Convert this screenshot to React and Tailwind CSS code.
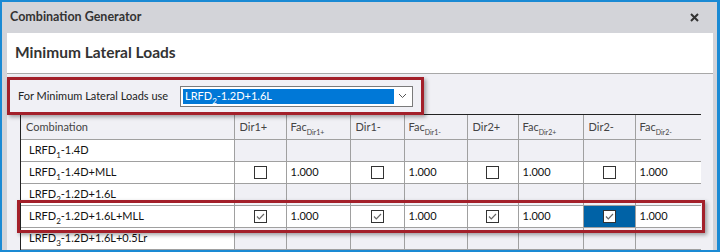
import React from "react";

const font = { fontFamily: 'Lato, "Segoe UI", "Noto Sans", sans-serif' };

const cols = [213, 52, 64, 54, 63, 51, 65, 52, 66];

const rows = [
  { n: "1", rest: "-1.4D", active: false },
  { n: "1", rest: "-1.4D+MLL", active: true, checked: false },
  { n: "2", rest: "-1.2D+1.6L", active: false },
  { n: "2", rest: "-1.2D+1.6L+MLL", active: true, checked: true },
  { n: "3", rest: "-1.2D+1.6L+0.5Lr", active: false },
];

function Check({ checked }) {
  return (
    <span className="inline-flex w-[13px] h-[13px] border border-[#333] bg-white items-center justify-center align-middle">
      {checked && (
        <svg width="11" height="11" viewBox="0 0 11 11">
          <path d="M2 5.5 L4.3 7.8 L9 3" fill="none" stroke="#666" strokeWidth="1.2" />
        </svg>
      )}
    </span>
  );
}

function Fac({ sub }) {
  return (
    <span>
      Fac<sub className="text-[7px] align-[-3px]">{sub}</sub>
    </span>
  );
}

function Lrfd({ n, rest }) {
  return (
    <span>
      LRFD<sub className="text-[8px] align-[-2px]">{n}</sub>
      {rest}
    </span>
  );
}

export default function App() {
  const dirs = ["Dir1+", "Dir1-", "Dir2+", "Dir2-"];
  return (
    <div style={font} className="w-[720px] h-[252px] border-t-2 border-l-2 border-r-[3px] border-b-2 border-[#1a8ad4] bg-[#d3d4d9] flex flex-col overflow-hidden">
      <div className="h-[31px] flex items-center justify-between pl-[8px] pr-[18px] shrink-0">
        <span className="text-[12.5px] font-bold text-[#333]">Combination Generator</span>
        <svg width="9" height="9" viewBox="0 0 9 9">
          <path d="M1 1 L8 8 M8 1 L1 8" stroke="#333" strokeWidth="2" />
        </svg>
      </div>
      <div className="flex-1 flex flex-col ml-[5px] mr-[4px] min-h-0">
        <div className="h-[41px] bg-white border-b border-[#a8a8a8] flex items-center pl-[8px] shrink-0">
          <span className="text-[15.5px] font-bold text-[#333]">Minimum Lateral Loads</span>
        </div>
        <div className="flex-1 bg-[#f0f0f5] relative">
          <div className="h-[40px] flex items-center pl-[11px] pt-[4px]">
            <span className="w-[162px] text-[11px] text-[#222] whitespace-nowrap">For Minimum Lateral Loads use</span>
            <div className="w-[233px] h-[21px] border border-[#7a7a7a] bg-white flex items-center p-[2px]">
              <div className="w-[211px] h-full bg-[#0078d7] text-white text-[11px] flex items-center pl-[2px]">
                <Lrfd n="2" rest="-1.2D+1.6L" />
              </div>
              <div className="flex-1 flex justify-center">
                <svg width="9" height="6" viewBox="0 0 9 6">
                  <path d="M1 1 L4.5 4.5 L8 1" fill="none" stroke="#555" strokeWidth="1" />
                </svg>
              </div>
            </div>
          </div>
          <div className="ml-[13px] w-[681px] border-l border-t border-r border-[#222]">
            <table className="table-fixed border-collapse text-[11px] text-[#111] w-[679px]">
              <colgroup>
                {cols.map((w, i) => (
                  <col key={i} style={{ width: w }} />
                ))}
              </colgroup>
              <thead>
                <tr className="h-[24px] bg-[#f0f0f5] text-[#444]">
                  <th className="font-normal text-left pl-[5px] border-r border-b border-[#a0a0a0]">Combination</th>
                  {dirs.map((d) => (
                    <React.Fragment key={d}>
                      <th className="font-normal text-left pl-[5px] border-r border-b border-[#a0a0a0]">{d}</th>
                      <th className="font-normal text-left pl-[4px] border-r border-b border-[#a0a0a0] last:border-r-0">
                        <Fac sub={d} />
                      </th>
                    </React.Fragment>
                  ))}
                </tr>
              </thead>
              <tbody>
                {rows.map((r, ri) => (
                  <tr key={ri} className="h-[22px]">
                    <td className="bg-white pl-[8px] border-r border-b border-[#a0a0a0] whitespace-nowrap">
                      <Lrfd n={r.n} rest={r.rest} />
                    </td>
                    {dirs.map((d, di) => (
                      <React.Fragment key={d}>
                        <td
                          className={`text-center border-r border-b border-[#a0a0a0] ${
                            !r.active ? "bg-[#f0f0f5]" : r.checked && di === 3 ? "bg-[#0062a6]" : "bg-white"
                          }`}
                        >
                          {r.active && <Check checked={r.checked} />}
                        </td>
                        <td
                          className={`pl-[4px] border-b border-[#a0a0a0] ${di < 3 ? "border-r" : ""} ${
                            r.active ? "bg-white" : "bg-[#f0f0f5]"
                          }`}
                        >
                          {r.active ? "1.000" : ""}
                        </td>
                      </React.Fragment>
                    ))}
                  </tr>
                ))}
              </tbody>
            </table>
          </div>
          <div className="absolute left-0 top-[3px] w-[417px] h-[38px] border-[3px] border-[#a3202a] shadow-[2px_2px_4px_rgba(0,0,0,0.35)] pointer-events-none" />
          <div className="absolute left-[10px] top-[126px] w-[688px] h-[33px] border-[3px] border-[#a3202a] shadow-[2px_2px_4px_rgba(0,0,0,0.35)] pointer-events-none" />
        </div>
      </div>
    </div>
  );
}
